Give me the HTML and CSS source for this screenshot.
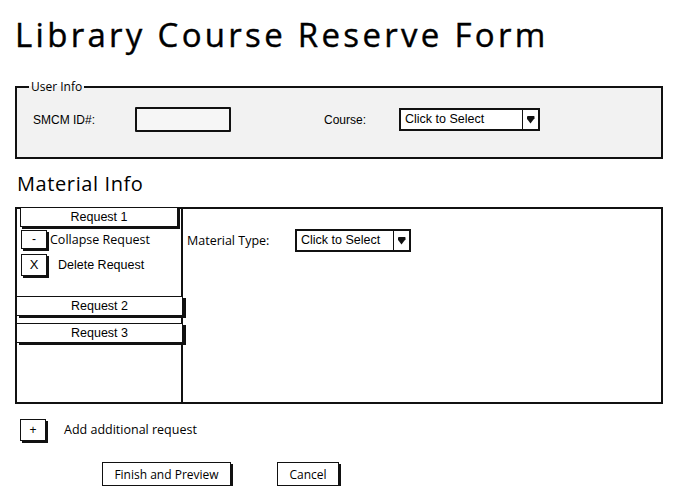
FILE: index.html
```html
<!DOCTYPE html>
<html lang="en">
<head>
  <meta charset="UTF-8">
  <title>Library Course Reserve Form</title>
  <link rel="stylesheet" href="styles.css">
</head>
<body>
  <div class="page">
    <h1 class="title">Library Course Reserve Form</h1>

    <!-- User info -->
    <fieldset class="user-info">
      <legend>User Info</legend>
      <div class="info-row">
        <label class="lbl lbl-id">SMCM ID#:</label>
        <div class="text-box"></div>
        <label class="lbl lbl-course">Course:</label>
        <div class="combo combo-course">
          <span class="combo-text">Click to Select</span>
          <span class="combo-arrow"><i></i></span>
        </div>
      </div>
    </fieldset>

    <!-- Material info -->
    <h2 class="section">Material Info</h2>
    <div class="material">
      <div class="req-list">
        <div class="req req-first">Request 1</div>
        <div class="req-action">
          <span class="mini-btn">-</span>
          <span class="sketch">Collapse Request</span>
        </div>
        <div class="req-action req-delete">
          <span class="mini-btn mini-x">X</span>
          <span class="plain">Delete Request</span>
        </div>
        <div class="req req-wide req-2">Request 2</div>
        <div class="req req-wide req-3">Request 3</div>
      </div>
      <div class="req-detail">
        <span class="sketch lbl-type">Material Type:</span>
        <div class="combo combo-type">
          <span class="combo-text">Click to Select</span>
          <span class="combo-arrow"><i></i></span>
        </div>
      </div>
    </div>

    <div class="add-row">
      <span class="mini-btn mini-plus">+</span>
      <span class="sketch">Add additional request</span>
    </div>

    <div class="actions">
      <button class="btn btn-finish">Finish and Preview</button>
      <button class="btn btn-cancel">Cancel</button>
    </div>
  </div>
</body>
</html>
```

FILE: styles.css
```css
body {
  margin: 0;
  background: #fff;
  color: #000;
  font-family: "Liberation Sans", Arial, sans-serif;
  font-size: 12px;
}
.page {
  padding-left: 15px;
}
.title {
  margin: 13px 0 0 0;
  font-family: "Open Sans", Lato, sans-serif;
  font-weight: 400;
  font-size: 33px;
  line-height: 44px;
  letter-spacing: 3.3px;
  -webkit-text-stroke: 0.4px #000;
}
.sketch {
  font-family: "Open Sans", Lato, sans-serif;
  font-size: 12.5px;
}

/* user info box */
.user-info {
  margin: 23px 0 0 0;
  width: 648px;
  box-sizing: border-box;
  padding: 13px 0 0 16px;
  height: 79px;
  border: 2px solid #111;
  background: #f2f2f2;
}
.user-info legend {
  padding: 0 2px;
  margin-left: -4px;
  font-family: "Open Sans", Lato, sans-serif;
  font-size: 12px;
  line-height: 14px;
}
.info-row {
  display: flex;
  align-items: center;
  height: 25px;
}
.lbl {
  font-size: 12px;
}
.lbl-id {
  width: 102px;
}
.lbl-course {
  width: 75px;
  margin-left: 93px;
}
.text-box {
  width: 96px;
  height: 25px;
  box-sizing: border-box;
  border: 2px solid #111;
  border-radius: 1px;
  background: #f6f6f6;
}
.combo {
  display: flex;
  height: 23px;
  box-sizing: border-box;
  border: 2px solid #111;
  background: #fff;
}
.combo-text {
  flex: 1;
  padding: 1px 0 0 4px;
  font-size: 12.5px;
  line-height: 16px;
}
.combo-arrow {
  width: 15px;
  border-left: 1.5px solid #111;
  display: flex;
  align-items: center;
  justify-content: center;
}
.combo-arrow i {
  width: 8px;
  height: 8px;
  background: #111;
  border-radius: 1px 1px 0 0;
  clip-path: polygon(0 0, 100% 0, 100% 35%, 50% 100%, 0 35%);
}
.combo-course {
  width: 141px;
}

/* material info */
.section {
  margin: 11px 0 0 2px;
  font-family: "Open Sans", Lato, sans-serif;
  font-weight: 400;
  font-size: 20px;
  line-height: 28px;
  letter-spacing: 0.6px;
}
.material {
  margin-top: 9px;
  width: 648px;
  height: 197px;
  box-sizing: border-box;
  border: 2px solid #111;
  display: grid;
  grid-template-columns: 166px 1fr;
}
.req-list {
  border-right: 2px solid #111;
  display: flex;
  flex-direction: column;
}
.req {
  height: 20px;
  box-sizing: border-box;
  border: 1px solid #111;
  background: #fff;
  text-align: center;
  font-size: 12.5px;
  line-height: 18px;
}
.req-first {
  margin: -2px 0 0 3px;
  width: 158px;
  box-shadow: 2px 2px 0 #111;
}
.req-wide {
  margin-left: -1px;
  width: 167px;
  box-shadow: 3px 2px 0 #111;
  position: relative;
}
.req-2 {
  margin-top: 20px;
}
.req-3 {
  margin-top: 7px;
}
.req-action {
  display: flex;
  align-items: center;
  margin: 3px 0 0 4px;
  height: 19px;
}
.req-delete {
  margin-top: 5px;
  height: 22px;
}
.req-delete .plain {
  margin-left: 8px;
  font-size: 12.5px;
}
.mini-btn {
  width: 26px;
  height: 19px;
  box-sizing: border-box;
  border: 1px solid #111;
  box-shadow: 2px 2px 0 #111;
  background: #fff;
  text-align: center;
  line-height: 16px;
  font-size: 12px;
  margin-right: 3px;
}
.mini-x {
  height: 22px;
  line-height: 20px;
  font-size: 13px;
}
.req-detail {
  display: flex;
  align-items: flex-start;
  padding: 20px 0 0 4px;
}
.lbl-type {
  width: 108px;
  margin-top: 3px;
}
.combo-type {
  width: 116px;
}

/* bottom rows */
.add-row {
  display: flex;
  align-items: center;
  margin: 14px 0 0 5px;
  height: 23px;
}
.mini-plus {
  height: 22px;
  line-height: 20px;
  margin-right: 18px;
}
.actions {
  display: flex;
  margin: 21px 0 0 87px;
  gap: 46px;
}
.btn {
  height: 24px;
  padding: 0 4px;
  border: 1px solid #111;
  border-radius: 0;
  box-shadow: 2px 2px 0 #111;
  background: #fff;
  font-family: "Open Sans", Lato, sans-serif;
  font-size: 12px;
  color: #000;
}
.btn-finish {
  width: 129px;
}
.btn-cancel {
  width: 62px;
}
```
